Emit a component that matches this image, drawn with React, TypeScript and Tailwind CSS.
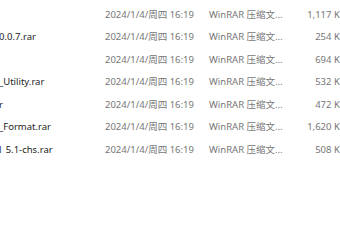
import React from 'react';

interface FileRow {
  name: string;
  date: string;
  type: string;
  size: string;
}

const rows: FileRow[] = [
  { name: '', date: '2024/1/4/周四 16:19', type: 'WinRAR 压缩文...', size: '1,117 KB' },
  { name: '0.0.7.rar', date: '2024/1/4/周四 16:19', type: 'WinRAR 压缩文...', size: '254 KB' },
  { name: '', date: '2024/1/4/周四 16:19', type: 'WinRAR 压缩文...', size: '694 KB' },
  { name: '_Utility.rar', date: '2024/1/4/周四 16:19', type: 'WinRAR 压缩文...', size: '532 KB' },
  { name: 'r', date: '2024/1/4/周四 16:19', type: 'WinRAR 压缩文...', size: '472 KB' },
  { name: '_Format.rar', date: '2024/1/4/周四 16:19', type: 'WinRAR 压缩文...', size: '1,620 KB' },
  { name: 'l_5.1-chs.rar', date: '2024/1/4/周四 16:19', type: 'WinRAR 压缩文...', size: '508 KB' },
];

export default function App() {
  return (
    <div
      className="w-[340px] h-[252px] overflow-hidden bg-white text-[9.5px]"
      style={{ fontFamily: '"Noto Sans", "Noto Sans CJK SC", sans-serif' }}
    >
      <div className="flex flex-col pt-[3px] w-[360px]">
        {rows.map((row, i) => (
          <div key={i} className={`flex items-center leading-none ${i % 2 === 0 ? 'h-[23px]' : 'h-[22px]'}`}>
            <div className="w-[105px] -ml-[1px] text-[#1c1c1c] whitespace-nowrap overflow-hidden">{row.name}</div>
            <div className="w-[105px] pl-[1px] text-[#767676] whitespace-nowrap">{row.date}</div>
            <div className="w-[88px] text-[#767676] whitespace-nowrap">{row.type}</div>
            <div className="w-[49px] text-right text-[#767676] whitespace-nowrap">{row.size}</div>
          </div>
        ))}
      </div>
    </div>
  );
}
